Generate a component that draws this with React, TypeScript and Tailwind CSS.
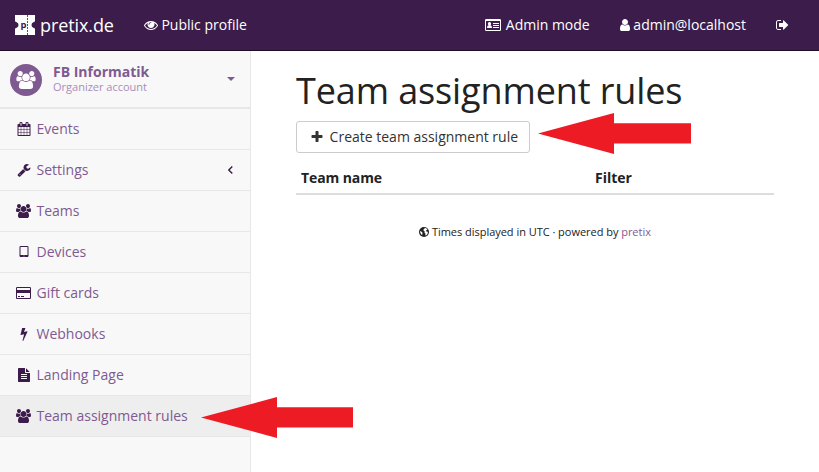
import React from "react";

const EYE =
  "M1664 960q-152-236-381-353 61 104 61 225 0 185-131.5 316.5t-316.5 131.5-316.5-131.5-131.5-316.5q0-121 61-225-229 117-381 353 133 205 333.5 326.5t434.5 121.5 434.5-121.5 333.5-326.5zm-720-384q0-20-14-34t-34-14q-125 0-214.5 89.5t-89.5 214.5q0 20 14 34t34 14 34-14 14-34q0-86 61-147t147-61q20 0 34-14t14-34zm848 384q0 34-20 69-140 230-376.5 368.5t-499.5 138.5-499.5-139-376.5-368q-20-35-20-69t20-69q140-229 376.5-368t499.5-139 499.5 139 376.5 368q20 35 20 69z";
const CALENDAR =
  "M192 1664h288v-288h-288v288zm352 0h320v-288h-320v288zm-352-352h288v-320h-288v320zm352 0h320v-320h-320v320zm-352-384h288v-288h-288v288zm736 736h320v-288h-320v288zm-384-736h320v-288h-320v288zm768 736h288v-288h-288v288zm-384-352h320v-320h-320v320zm-352-864v-288q0-13-9.5-22.5t-22.5-9.5h-64q-13 0-22.5 9.5t-9.5 22.5v288q0 13 9.5 22.5t22.5 9.5h64q13 0 22.5-9.5t9.5-22.5zm736 864h288v-320h-288v320zm-384-384h320v-288h-320v288zm384 0h288v-288h-288v288zm32-480v-288q0-13-9.5-22.5t-22.5-9.5h-64q-13 0-22.5 9.5t-9.5 22.5v288q0 13 9.5 22.5t22.5 9.5h64q13 0 22.5-9.5t9.5-22.5zm384-64v1280q0 52-38 90t-90 38h-1408q-52 0-90-38t-38-90v-1280q0-52 38-90t90-38h128v-96q0-66 47-113t113-47h64q66 0 113 47t47 113v96h384v-96q0-66 47-113t113-47h64q66 0 113 47t47 113v96h128q52 0 90 38t38 90z";
const WRENCH =
  "M448 1472q0-26-19-45t-45-19-45 19-19 45 19 45 45 19 45-19 19-45zm644-420l-682 682q-37 37-90 37-52 0-91-37l-106-108q-38-36-38-90 0-53 38-91l681-681q39 98 114.5 173.5t173.5 114.5zm634-435q0 39-23 106-47 134-164.5 217.5t-258.5 83.5q-185 0-316.5-131.5t-131.5-316.5 131.5-316.5 316.5-131.5q58 0 121.5 16.5t107.5 46.5q16 11 16 28t-16 28l-293 169v224l193 107q5-3 79-48.5t135.5-81 70.5-35.5q15 0 23.5 10t8.5 25z";
const USERS =
  "M593 896q-162 5-265 128h-134q-82 0-138-40.5t-56-118.5q0-353 124-353 6 0 43.5 21t97.5 42.5 119 21.5q67 0 133-23-5 37-5 66 0 139 81 256zm1071 637q0 120-73 189.5t-194 69.5h-874q-121 0-194-69.5t-73-189.5q0-53 3.5-103.5t14-109 26.5-108.5 43-97.5 62-81 85.5-53.5 111.5-20q10 0 43 21.5t73 48 107 48 135 21.5 135-21.5 107-48 73-48 43-21.5q61 0 111.5 20t85.5 53.5 62 81 43 97.5 26.5 108.5 14 109 3.5 103.5zm-1024-1277q0 106-75 181t-181 75-181-75-75-181 75-181 181-75 181 75 75 181zm704 384q0 159-112.5 271.5t-271.5 112.5-271.5-112.5-112.5-271.5 112.5-271.5 271.5-112.5 271.5 112.5 112.5 271.5zm576 225q0 78-56 118.5t-138 40.5h-134q-103-123-265-128 81-117 81-256 0-29-5-66 66 23 133 23 59 0 119-21.5t97.5-42.5 43.5-21q124 0 124 353zm-128-609q0 106-75 181t-181 75-181-75-75-181 75-181 181-75 181 75 75 181z";
const USER =
  "M1408 1399q0 109-62.5 187t-150.5 78h-854q-88 0-150.5-78t-62.5-187q0-85 8.5-160.5t31.5-152 58.5-131 94-89 134.5-34.5q131 128 313 128t313-128q76 0 134.5 34.5t94 89 58.5 131 31.5 152 8.5 160.5zm-256-887q0 159-112.5 271.5t-271.5 112.5-271.5-112.5-112.5-271.5 112.5-271.5 271.5-112.5 271.5 112.5 112.5 271.5z";
const SIGN_OUT =
  "M640 1440q0 4 1 20t.5 26.5-3 23.5-10 19.5-20.5 6.5h-320q-119 0-203.5-84.5t-84.5-203.5v-704q0-119 84.5-203.5t203.5-84.5h320q13 0 22.5 9.5t9.5 22.5q0 4 1 20t.5 26.5-3 23.5-10 19.5-20.5 6.5h-320q-66 0-113 47t-47 113v704q0 66 47 113t113 47h312l11.5 1 11.5 3 8 5.5 7 9 2 13.5zm928-544q0 26-19 45l-544 544q-19 19-45 19t-45-19-19-45v-288h-448q-26 0-45-19t-19-45v-384q0-26 19-45t45-19h448v-288q0-26 19-45t45-19 45 19l544 544q19 19 19 45z";
const PLUS =
  "M1600 736v192q0 40-28 68t-68 28h-416v416q0 40-28 68t-68 28h-192q-40 0-68-28t-28-68v-416h-416q-40 0-68-28t-28-68v-192q0-40 28-68t68-28h416v-416q0-40 28-68t68-28h192q40 0 68 28t28 68v416h416q40 0 68 28t28 68z";
const BOLT =
  "M1333 566q18 20 7 44l-540 1157q-13 25-42 25-4 0-14-2-17-5-25.5-19t-4.5-30l197-808-406 101q-4 1-12 1-18 0-31-11-18-15-13-39l201-825q4-14 16-23t28-9h328q19 0 32 12.5t13 29.5q0 8-5 18l-171 463 396-98q8-2 12-2 19 0 34 15z";
const FILE =
  "M1596 476q14 14 28 36h-472v-472q22 14 36 28zm-476 164h544v1056q0 40-28 68t-68 28h-1344q-40 0-68-28t-28-68v-1600q0-40 28-68t68-28h800v544q0 40 28 68t68 28zm160 736v-64q0-14-9-23t-23-9h-704q-14 0-23 9t-9 23v64q0 14 9 23t23 9h704q14 0 23-9t9-23zm0-256v-64q0-14-9-23t-23-9h-704q-14 0-23 9t-9 23v64q0 14 9 23t23 9h704q14 0 23-9t9-23zm0-256v-64q0-14-9-23t-23-9h-704q-14 0-23 9t-9 23v64q0 14 9 23t23 9h704q14 0 23-9t9-23z";
const CARD =
  "M1760 128q66 0 113 47t47 113v1216q0 66-47 113t-113 47h-1600q-66 0-113-47t-47-113v-1216q0-66 47-113t113-47h1600zm-1600 128q-13 0-22.5 9.5t-9.5 22.5v224h1664v-224q0-13-9.5-22.5t-22.5-9.5h-1600zm1600 1280q13 0 22.5-9.5t9.5-22.5v-608h-1664v608q0 13 9.5 22.5t22.5 9.5h1600zm-1504-128v-128h256v128h-256zm384 0v-128h384v128h-384z";
const TABLET =
  "M960 1408q0-26-19-45t-45-19-45 19-19 45 19 45 45 19 45-19 19-45zm384-160v-960q0-13-9.5-22.5t-22.5-9.5h-832q-13 0-22.5 9.5t-9.5 22.5v960q0 13 9.5 22.5t22.5 9.5h832q13 0 22.5-9.5t9.5-22.5zm128-960v1088q0 66-47 113t-113 47h-832q-66 0-113-47t-47-113v-1088q0-66 47-113t113-47h832q66 0 113 47t47 113z";

function Icon({ d, units = 1792, className }: { d: string; units?: number; className: string }) {
  return (
    <svg viewBox={`0 0 ${units} 1792`} fill="currentColor" className={`inline-block shrink-0 ${className}`}>
      <path d={d} />
    </svg>
  );
}

function IdCard() {
  return (
    <svg viewBox="0 0 16 14" className="mr-[1px] inline-block h-[14px] w-[16px] align-[-2px]">
      <path
        fill="currentColor"
        fillRule="evenodd"
        d="M1.2 1h13.6Q16 1 16 2.2v9.6Q16 13 14.8 13H1.2Q0 13 0 11.8V2.200Q0 1 1.2 1zM1 3v8.8q0 .2.2.2h13.6q.2 0 .2-.2V3zM2 10q0-2.700 1.500-2.700h2Q7 7.300 7 10zM4.500 4a1.650 1.650 0 1 1 0 3.300 1.650 1.650 0 0 1 0-3.300zM8 5h6v1H8zM8 7h6v1H8zM8 9h6v1H8z"
      />
    </svg>
  );
}

function Globe() {
  return (
    <svg viewBox="0 0 12 12" className="inline-block size-[10px] align-[-1px]">
      <circle cx="6" cy="6" r="6" fill="#222" />
      <path
        fill="#fff"
        d="M6.800 1 9 1.700l1.200 1.300-1.400.9-.6 1.200 1.600.3.9 1.300-.6 2-1.700 1.600-.8-.4.2-1.700-1.200-1.200.3-1.600-1.300-.9-.3-1.500 1.300-.8zM1.300 4.800l1.900 1 1.200 1.400-.6 1.300.2 1.300-1.500-1.200-1-2z"
      />
    </svg>
  );
}

function Logo() {
  return (
    <svg viewBox="0 0 20 20" className="size-5">
      <path fill="#fff" d="M0 0h20v6.500q-1 0-1.600.8-1.900.7-1.900 2.700t1.900 2.700q.6.800 1.600.8V20H0v-6.500q1 0 1.600-.8 1.900-.7 1.900-2.700T1.600 7.300Q1 6.500 0 6.500z" />
      <path stroke="#3b1c4a" strokeWidth=".8" strokeDasharray="2 1" d="M12.500 0v20" />
      <text x="5.600" y="13" fontSize="9.500" fontWeight="700" fill="#3b1c4a">p</text>
    </svg>
  );
}

const items = [
  { label: "Events", d: CALENDAR, units: 1792, w: "w-[14px]" },
  { label: "Settings", d: WRENCH, units: 1792, w: "w-[14px]", arrow: true },
  { label: "Teams", d: USERS, units: 1920, w: "w-[15px]" },
  { label: "Devices", d: TABLET, units: 1792, w: "w-[14px]" },
  { label: "Gift cards", d: CARD, units: 1920, w: "w-[15px]" },
  { label: "Webhooks", d: BOLT, units: 1792, w: "w-[14px]" },
  { label: "Landing Page", d: FILE, units: 1792, w: "w-[14px]" },
  { label: "Team assignment rules", d: USERS, units: 1920, w: "w-[15px]", active: true },
];

function RedArrow({ length }: { length: number }) {
  return (
    <svg viewBox="0 0 155 41" className="h-[41px] w-[155px]">
      <path fill="#ed1c24" d={`M1 20.400 77 0v10.200h${length}v20.400H77V41z`} />
    </svg>
  );
}

export default function App() {
  return (
    <div className="relative flex h-[472px] w-[819px] flex-col overflow-hidden bg-white font-['Open_Sans',sans-serif] text-sm leading-5 text-[#222]">
      <header className="flex h-[51px] shrink-0 items-center border-b border-[#1d0e25] bg-[#3b1c4a] pr-[30px] pl-[15px] text-white">
        <Logo />
        <span className="ml-[5px] text-[18px] tracking-[-0.1px]">pretix.de</span>
        <a className="ml-[30px]">
          <Icon d={EYE} className="h-[14px] w-[14px] align-[-2px]" /> Public profile
        </a>
        <nav className="ml-auto flex">
          <a><IdCard /> Admin mode</a>
          <a className="ml-[29px]"><Icon d={USER} units={1408} className="h-[14px] w-[11px] align-[-2px]" /> admin@localhost</a>
          <a className="ml-[30px]"><Icon d={SIGN_OUT} units={1664} className="h-[14px] w-[13px] align-[-2px]" /></a>
        </nav>
      </header>
      <div className="flex flex-1">
        <aside className="w-[251px] shrink-0 border-r border-[#e7e7e7] bg-[#f8f8f8] text-[#7f5a91]">
          <div className="flex h-[58px] items-center border-b-2 border-[#e7e7e7] pr-[15px] pl-[10px]">
            <div className="mt-px flex size-8 items-center justify-center rounded-full bg-[#7f5a91] text-white">
              <Icon d={USERS} units={1920} className="h-[18px] w-[20px]" />
            </div>
            <div className="ml-[11px]">
              <div className="text-sm leading-4 font-bold">FB Informatik</div>
              <div className="text-[11px] leading-[14px] text-[#a98dba]">Organizer account</div>
            </div>
            <svg viewBox="0 0 8 4" className="ml-auto h-1 w-2"><path fill="#7f5a91" d="M0 0h8L4 4z" /></svg>
          </div>
          <ul>
            {items.map((it) => (
              <li key={it.label} className={`flex h-[41px] items-center border-b border-[#e7e7e7] px-[15px] ${it.active ? "bg-[#eee]" : ""}`}>
                <span className="flex w-[17px] justify-center text-[#3b1c4a]">
                  <Icon d={it.d} units={it.units} className={`h-[14px] ${it.w}`} />
                </span>
                <span className="ml-[4.500px]">{it.label}</span>
                {it.arrow && (
                  <svg viewBox="0 0 5 8" className="mr-[2px] ml-auto h-2 w-[5px]"><path fill="none" stroke="#3b1c4a" strokeWidth="1.400" d="M4.300.5.8 4l3.500 3.500" /></svg>
                )}
              </li>
            ))}
          </ul>
        </aside>
        <main className="flex-1 pr-[45px] pl-[45px]">
          <h1 className="mt-5 text-[36px] leading-10 tracking-[-0.12px]">Team assignment rules</h1>
          <button className="mt-[10px] flex h-8 w-[234px] items-center rounded-[3px] border border-[#ccc] bg-white pl-[13px] text-[#333]">
            <Icon d={PLUS} className="h-[14px] w-[14px]" />
            <span className="ml-[5.600px]">Create team assignment rule</span>
          </button>
          <div className="mt-[10px] flex h-8 items-center border-b-2 border-[#ddd] pl-[5px] font-bold">
            <span className="w-[294px] tracking-[-0.1px]">Team name</span>
            <span>Filter</span>
          </div>
          <footer className="mt-[29px] text-center text-[11px] leading-4 tracking-[-0.03px]">
            <Globe /> Times displayed in UTC · powered by <a className="text-[#7f5a91]">pretix</a>
          </footer>
        </main>
      </div>
      <div className="absolute top-[113px] left-[537px] flex"><RedArrow length={77} /></div>
      <div className="absolute top-[397px] left-[200px] flex"><RedArrow length={76} /></div>
    </div>
  );
}
